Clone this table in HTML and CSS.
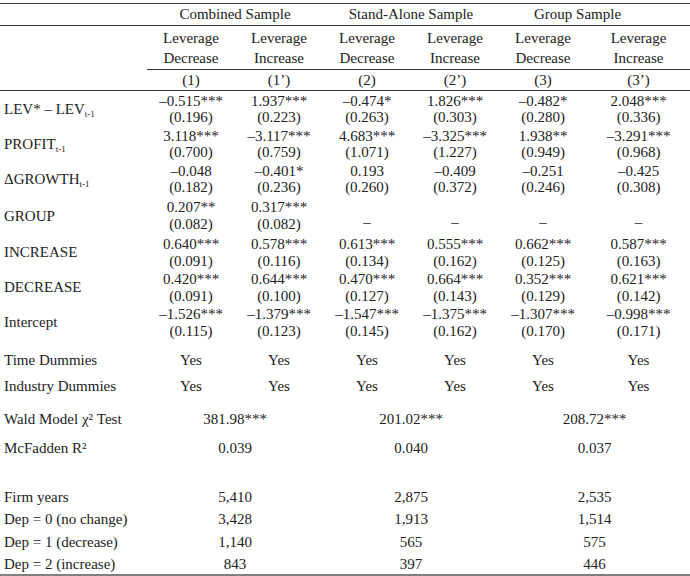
FILE: index.html
```html
<!DOCTYPE html>
<html lang="en">
<head>
  <meta charset="UTF-8">
  <meta name="viewport" content="width=device-width, initial-scale=1.0">
  <title>Leverage Adjustment | Multinomial Logit Results</title>

  <link rel="stylesheet" href="styles.css">
</head>
<body>

  <div class="page">
    <table class="results">
      <colgroup>
        <col class="col-label">
        <col class="col-num">
        <col class="col-num">
        <col class="col-num">
        <col class="col-num">
        <col class="col-num">
        <col class="col-last">
      </colgroup>

      <thead>
        <tr class="group-row">
          <th></th>
          <th colspan="2">Combined Sample</th>
          <th colspan="2">Stand-Alone Sample</th>
          <th colspan="2" class="group-last">Group Sample</th>
        </tr>
        <tr class="dir-row">
          <th class="blank"></th>
          <th>Leverage<br>Decrease</th>
          <th>Leverage<br>Increase</th>
          <th>Leverage<br>Decrease</th>
          <th>Leverage<br>Increase</th>
          <th>Leverage<br>Decrease</th>
          <th>Leverage<br>Increase</th>
        </tr>
        <tr class="model-row">
          <th></th>
          <th>(1)</th>
          <th>(1’)</th>
          <th>(2)</th>
          <th>(2’)</th>
          <th>(3)</th>
          <th>(3’)</th>
        </tr>
      </thead>

      <!-- coefficient over standard error -->
      <tbody class="coefs">
        <tr>
          <td class="label">LEV* – LEV<sub>t-1</sub></td>
          <td>–0.515***<br>(0.196)</td>
          <td>1.937***<br>(0.223)</td>
          <td>–0.474*<br>(0.263)</td>
          <td>1.826***<br>(0.303)</td>
          <td>–0.482*<br>(0.280)</td>
          <td>2.048***<br>(0.336)</td>
        </tr>
        <tr>
          <td class="label">PROFIT<sub>t-1</sub></td>
          <td>3.118***<br>(0.700)</td>
          <td>–3.117***<br>(0.759)</td>
          <td>4.683***<br>(1.071)</td>
          <td>–3.325***<br>(1.227)</td>
          <td>1.938**<br>(0.949)</td>
          <td>–3.291***<br>(0.968)</td>
        </tr>
        <tr>
          <td class="label">ΔGROWTH<sub>t-1</sub></td>
          <td>–0.048<br>(0.182)</td>
          <td>–0.401*<br>(0.236)</td>
          <td>0.193<br>(0.260)</td>
          <td>–0.409<br>(0.372)</td>
          <td>–0.251<br>(0.246)</td>
          <td>–0.425<br>(0.308)</td>
        </tr>
        <tr>
          <td class="label">GROUP</td>
          <td>0.207**<br>(0.082)</td>
          <td>0.317***<br>(0.082)</td>
          <td class="dash">–</td>
          <td class="dash">–</td>
          <td class="dash">–</td>
          <td class="dash">–</td>
        </tr>
        <tr>
          <td class="label">INCREASE</td>
          <td>0.640***<br>(0.091)</td>
          <td>0.578***<br>(0.116)</td>
          <td>0.613***<br>(0.134)</td>
          <td>0.555***<br>(0.162)</td>
          <td>0.662***<br>(0.125)</td>
          <td>0.587***<br>(0.163)</td>
        </tr>
        <tr>
          <td class="label">DECREASE</td>
          <td>0.420***<br>(0.091)</td>
          <td>0.644***<br>(0.100)</td>
          <td>0.470***<br>(0.127)</td>
          <td>0.664***<br>(0.143)</td>
          <td>0.352***<br>(0.129)</td>
          <td>0.621***<br>(0.142)</td>
        </tr>
        <tr>
          <td class="label">Intercept</td>
          <td>–1.526***<br>(0.115)</td>
          <td>–1.379***<br>(0.123)</td>
          <td>–1.547***<br>(0.145)</td>
          <td>–1.375***<br>(0.162)</td>
          <td>–1.307***<br>(0.170)</td>
          <td>–0.998***<br>(0.171)</td>
        </tr>
      </tbody>

      <tbody class="stats">
        <tr class="dummy-first">
          <td class="label">Time Dummies</td>
          <td>Yes</td><td>Yes</td><td>Yes</td><td>Yes</td><td>Yes</td><td>Yes</td>
        </tr>
        <tr class="dummy">
          <td class="label">Industry Dummies</td>
          <td>Yes</td><td>Yes</td><td>Yes</td><td>Yes</td><td>Yes</td><td>Yes</td>
        </tr>
        <tr class="fit-first">
          <td class="label">Wald Model χ² Test</td>
          <td colspan="2">381.98***</td>
          <td colspan="2">201.02***</td>
          <td colspan="2">208.72***</td>
        </tr>
        <tr class="fit">
          <td class="label">McFadden R²</td>
          <td colspan="2">0.039</td>
          <td colspan="2">0.040</td>
          <td colspan="2">0.037</td>
        </tr>
        <tr class="count-first">
          <td class="label">Firm years</td>
          <td colspan="2">5,410</td>
          <td colspan="2">2,875</td>
          <td colspan="2">2,535</td>
        </tr>
        <tr class="count">
          <td class="label">Dep = 0 (no change)</td>
          <td colspan="2">3,428</td>
          <td colspan="2">1,913</td>
          <td colspan="2">1,514</td>
        </tr>
        <tr class="count">
          <td class="label">Dep = 1 (decrease)</td>
          <td colspan="2">1,140</td>
          <td colspan="2">565</td>
          <td colspan="2">575</td>
        </tr>
        <tr class="count count-last">
          <td class="label">Dep = 2 (increase)</td>
          <td colspan="2">843</td>
          <td colspan="2">397</td>
          <td colspan="2">446</td>
        </tr>
      </tbody>
    </table>
  </div>

</body>
</html>
```

FILE: styles.css
```css
body {
  font-family: 'Liberation Serif', 'Times New Roman', serif;
  font-size: 15px;
  background-color: #fff;
  color: #222;
  margin: 0;
}

.page {
  padding-top: 3px;
}

.results {
  width: 690px;
  table-layout: fixed;
  border-collapse: collapse;
  border-top: 1px solid #3a3a3a;
  border-bottom: 2px solid #808080;
}

.col-label {
  width: 147px;
}

.col-num {
  width: 88px;
}

.col-last {
  width: 103px;
}

th,
td {
  padding: 0;
  font-weight: normal;
  text-align: center;
  line-height: 16.5px;
}

/* header block */
.group-row th {
  line-height: 21px;
  border-bottom: 1px solid #3a3a3a;
}

.group-last {
  padding-right: 34px; /* label sits left of the column pair */
}

.dir-row th {
  line-height: 20.5px;
  padding-top: 1.5px;
}

.dir-row th + th {
  border-bottom: 1px solid #3a3a3a;
}

.model-row th {
  line-height: 20px;
  border-bottom: 1px solid #3a3a3a;
}

/* body */
.label {
  text-align: left;
  padding-left: 4px;
  vertical-align: middle;
  white-space: nowrap;
}

sub {
  font-size: 9px;
  line-height: 0;
  vertical-align: -3px;
}

.coefs td {
  padding-top: 2px;
  height: 32.5px;
}

.coefs td.dash {
  vertical-align: bottom;
  padding-bottom: 4px;
}

.dummy-first td {
  padding-top: 12.5px;
}

.dummy td {
  padding-top: 10px;
}

.fit-first td {
  padding-top: 16px;
}

.fit td {
  padding-top: 13px;
}

.count-first td {
  padding-top: 32px;
}

.count td {
  padding-top: 6px;
}

.count-last td {
  padding-bottom: 1.5px;
}
```
